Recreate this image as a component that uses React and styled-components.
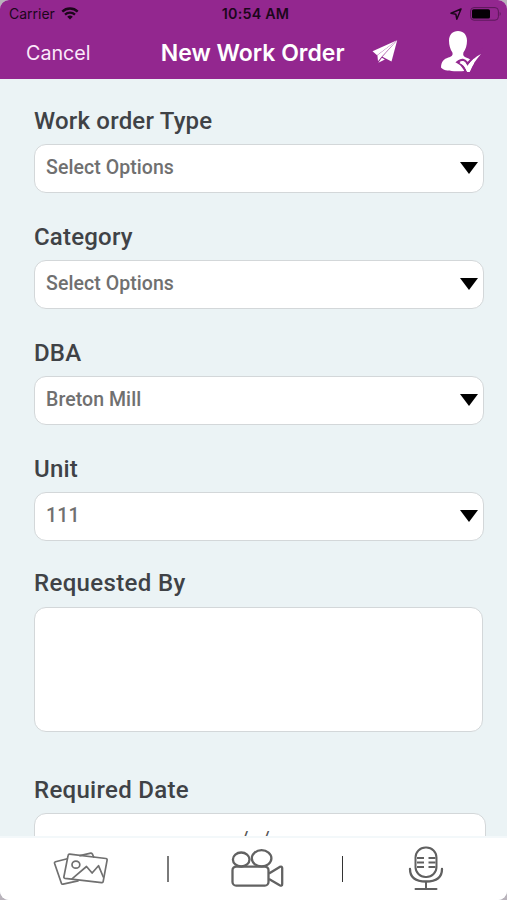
import React from "react";
import styled, { createGlobalStyle } from "styled-components";

const selects = [
  { label: "Work order Type", value: "Select Options" },
  { label: "Category", value: "Select Options" },
  { label: "DBA", value: "Breton Mill" },
  { label: "Unit", value: "111", spacing: "0.2px" },
];

function App() {
  return (
    <Screen>
      <GlobalStyle />
      <Header>
        <StatusBar>
          <Carrier>
            Carrier
            <WifiIcon />
          </Carrier>
          <Time>10:54 AM</Time>
          <StatusIcons>
            <LocationIcon />
            <BatteryIcon />
          </StatusIcons>
        </StatusBar>
        <NavBar>
          <Cancel>Cancel</Cancel>
          <Title>New Work Order</Title>
          <SendButton>
            <SendIcon />
          </SendButton>
          <UserButton>
            <UserCheckIcon />
          </UserButton>
        </NavBar>
      </Header>
      <Form>
        {selects.map((item) => (
          <Field key={item.label}>
            <Label>{item.label}</Label>
            <Select>
              <Value $spacing={item.spacing}>{item.value}</Value>
              <Caret />
            </Select>
          </Field>
        ))}
        <Field $gap="36px">
          <Label $height="45px" $line="42px" $spacing="0.35px">
            Requested By
          </Label>
          <TextBox />
        </Field>
        <Field>
          <Label $height="45px" $line="45px" $spacing="0.3px">
            Required Date
          </Label>
          <DateBox>
            <span>/</span>
            <span>/</span>
          </DateBox>
        </Field>
      </Form>
      <Toolbar>
        <Tool $width="167px" $padding="3px 5px 0 0">
          <PhotosIcon />
        </Tool>
        <Divider $color="#7a7a7a" $width="2px" />
        <Tool $width="173px" $padding="0 0 0 5px">
          <VideoIcon />
        </Tool>
        <Divider $color="#333333" $width="1px" />
        <Tool $width="164px" $padding="0 0 0 2px">
          <MicIcon />
        </Tool>
      </Toolbar>
    </Screen>
  );
}

export default App;

const WifiIcon = () => (
  <svg width="18" height="13" viewBox="0 0 18 13" fill="none" stroke="#1c061b">
    <path d="M1.3 4.6a11 11 0 0 1 15.4 0" strokeWidth="2.4" />
    <path d="M4 7.6a7.1 7.1 0 0 1 10 0" strokeWidth="2.2" />
    <path d="M9 12.6 6.2 9.7a4.1 4.1 0 0 1 5.6 0z" fill="#1c061b" stroke="none" />
  </svg>
);

const LocationIcon = () => (
  <svg width="12" height="12" viewBox="0 0 12 12">
    <path
      d="M11 1 1 5.3l4.9 1 .9 4.900z"
      fill="none"
      stroke="#1c061b"
      strokeWidth="1.5"
      strokeLinejoin="round"
    />
  </svg>
);

const BatteryIcon = () => (
  <svg width="32" height="14" viewBox="0 0 32 14">
    <rect x=".6" y=".6" width="27.8" height="12.6" rx="3.4" fill="none" stroke="#5c185a" />
    <rect x="2" y="2.2" width="18" height="9.4" rx="1.6" fill="#050005" />
    <path d="M29.7 4.8q2 2.1 0 4.2z" fill="#5c185a" />
  </svg>
);

const SendIcon = () => (
  <svg width="26" height="24" viewBox="0 0 26 24" fill="#fff">
    <path d="M25 .3.5 11.200 5 15.200z" />
    <path d="M24.800 .5 5.400 15.300 6 21.300 9.600 16.800z" />
    <path d="M25.200 .3 10.400 16.700 19.500 21.500z" />
    <path d="m6.300 22.800 3.600-5 3 1.600z" />
  </svg>
);

const UserCheckIcon = () => (
  <svg width="43" height="43" viewBox="0 0 43 43" fill="#fff">
    <path d="M18 0c5.300 0 9 3.600 9 9.800 0 4.400-1.300 8.700-3.600 11.700-.7 3 .4 4 2.600 4.900 3.600 1.500 6.800 2.300 7.800 7.300v3C29.300 39.700 22 40.600 14 40.300 7.500 40.100 2.700 39 1 36.600c.2-6.600 3-8.300 7.200-10 3.500-1.400 5-2.200 4.200-5.200C10.200 18.400 9 14.200 9 9.800 9 3.600 12.700 0 18 0z" />
    <path
      d="M19.500 31c2.200-1.700 4.600-1.300 6 .8l1.900 3.200c4-5.600 8-9.300 13.600-12-5 5.600-8.400 10.700-11.200 17.500q-1.400 1-2.800 0c-1.800-4-3.500-7.200-7.500-9.500z"
      stroke="#93278f"
      strokeWidth="4.600"
      paintOrder="stroke"
    />
    <path d="M34 24 44 16v26H34z" fill="#93278f" />
    <path d="M19.500 32.300c2.200-2.200 4.600-2.200 6-.5l1.900 3.200c4-5.600 8-9.300 13.600-12-5 5.600-8.400 10.700-11.200 17.500q-1.400 1-2.800 0c-1.800-4-3.500-7.200-7.500-8.200z" />
  </svg>
);

const PhotosIcon = () => (
  <svg
    width="56"
    height="36"
    viewBox="0 0 56 36"
    fill="none"
    stroke="#707070"
    strokeWidth="1.7"
    strokeLinejoin="round"
    strokeLinecap="round"
  >
    <path d="M14.3 6.7 2.5 9.8q-1.3.4-.9 1.7l6.8 19.7q.4 1.300 1.700 1L25 28.900M27 3.700l10.800-2.500q1.200-.2 1.600 1L40.700 5" />
    <path d="m16.700 2.200 36.200 4.300q1.400.2 1.200 1.600l-3.900 21.300q-.2 1.400-1.600 1.200L12 26.300q-1.400-.2-1.100-1.600L15.100 3.400q.2-1.300 1.600-1.200z" />
    <ellipse cx="22.9" cy="12.7" rx="3.9" ry="3.5" />
    <path d="m19 26.800 3.200-2.700 11.300-9.600 5.600 6.500 6.400-7.300L50.300 25" />
  </svg>
);

const VideoIcon = () => (
  <svg width="54" height="39" viewBox="0 0 54 39" fill="none" stroke="#626262" strokeWidth="2.3">
    <ellipse cx="10.2" cy="10.5" rx="8.3" ry="7" />
    <ellipse cx="30.6" cy="9.3" rx="9.8" ry="8.1" />
    <rect x="1.5" y="17.6" width="36" height="19" rx="3.7" />
    <path d="m38 24.500 10.700-6.600q2.500-1 2.500 1.200v15.800q0 2.600-2.500 1.300L38 30" strokeLinejoin="round" />
  </svg>
);

const MicIcon = () => (
  <svg
    width="36"
    height="45"
    viewBox="0 0 36 45"
    fill="none"
    stroke="#606060"
    strokeWidth="2"
    strokeLinecap="round"
  >
    <rect x="7.5" y="1.5" width="21" height="29.5" rx="10" />
    <path
      d="M9 12h7M9 16.500h7M9 21h7M20.500 12h7M20.500 16.500h7M20.500 21h7"
      strokeWidth="1.8"
      strokeLinecap="butt"
    />
    <path d="M2 23c0 8.500 6 12.500 16 12.500S34 31.500 34 23" strokeWidth="2.3" />
    <path d="M18 36v7M7.500 43h21" />
  </svg>
);

const GlobalStyle = createGlobalStyle`
  * {
    box-sizing: border-box;
  }

  body {
    margin: 0;
    background: #b9b3bb;
    font-family: Roboto, "Liberation Sans", sans-serif;
  }
`;

const Screen = styled.div`
  display: flex;
  flex-direction: column;
  width: 507px;
  height: 900px;
  overflow: hidden;
  border-radius: 9px;
  background-color: #ebf3f5;
`;

const Header = styled.header`
  flex: none;
  height: 79px;
  background-color: #93278f;
`;

const StatusBar = styled.div`
  display: grid;
  grid-template-columns: 1fr auto 1fr;
  align-items: center;
  height: 27px;
  padding: 0 5px 0 9px;
  color: #1c061b;
  font-family: Inter, sans-serif;
  font-size: 14px;
`;

const Carrier = styled.div`
  display: flex;
  align-items: center;
  gap: 6px;
`;

const Time = styled.div`
  font-weight: 600;
  font-size: 14.3px;
  letter-spacing: 0.2px;
`;

const StatusIcons = styled.div`
  display: flex;
  justify-content: flex-end;
  align-items: center;
  gap: 8px;
`;

const NavBar = styled.div`
  display: flex;
  align-items: center;
  height: 50px;
  padding: 0 24px 0 26px;
  color: #ffffff;
  font-family: Inter, sans-serif;
`;

const Cancel = styled.div`
  width: 135px;
  padding-top: 2px;
  font-size: 19.7px;
  color: #fbe9fa;
`;

const Title = styled.div`
  width: 212px;
  padding-top: 2px;
  font-size: 23px;
  font-weight: 600;
  white-space: nowrap;
`;

const SendButton = styled.div`
  display: flex;
  width: 68px;
`;

const UserButton = styled.div`
  display: flex;
`;

const Form = styled.main`
  flex: 1;
  min-height: 0;
  overflow: hidden;
  padding: 19px 21px 0 34px;
`;

const Field = styled.div`
  margin-bottom: ${(props) => props.$gap || "21px"};
`;

const Label = styled.div`
  height: ${(props) => props.$height || "46px"};
  line-height: ${(props) => props.$line || "47px"};
  font-size: 24px;
  font-weight: 500;
  letter-spacing: ${(props) => props.$spacing || "0.2px"};
  color: #3f4246;
`;

const Select = styled.div`
  display: flex;
  justify-content: space-between;
  align-items: center;
  width: 450px;
  height: 49px;
  padding: 0 5px 3px 11px;
  border: 1px solid #d3d7d9;
  border-radius: 12px;
  background-color: #ffffff;
`;

const Value = styled.span`
  font-size: 19.5px;
  font-weight: 500;
  letter-spacing: ${(props) => props.$spacing || "0.07px"};
  color: #707070;
`;

const Caret = styled.span`
  margin-top: 2px;
  border: 9px solid transparent;
  border-top: 12px solid #000000;
  border-bottom: 0;
`;

const TextBox = styled.div`
  width: 449px;
  height: 125px;
  border: 1px solid #d3d7d9;
  border-radius: 12px;
  background-color: #ffffff;
`;

const DateBox = styled.div`
  display: flex;
  justify-content: center;
  gap: 13px;
  width: 452px;
  height: 49px;
  padding: 13px 10px 0 0;
  border: 1px solid #d3d7d9;
  border-radius: 12px;
  background-color: #ffffff;
  font-size: 20px;
  color: #555555;
`;

const Toolbar = styled.footer`
  flex: none;
  display: flex;
  align-items: center;
  height: 64px;
  padding-bottom: 1px;
  border-top: 2px solid #f3f8fa;
  background-color: #ffffff;
`;

const Tool = styled.div`
  display: flex;
  justify-content: center;
  width: ${(props) => props.$width};
  padding: ${(props) => props.$padding || 0};
`;

const Divider = styled.div`
  width: ${(props) => props.$width};
  height: 26px;
  background-color: ${(props) => props.$color};
`;
